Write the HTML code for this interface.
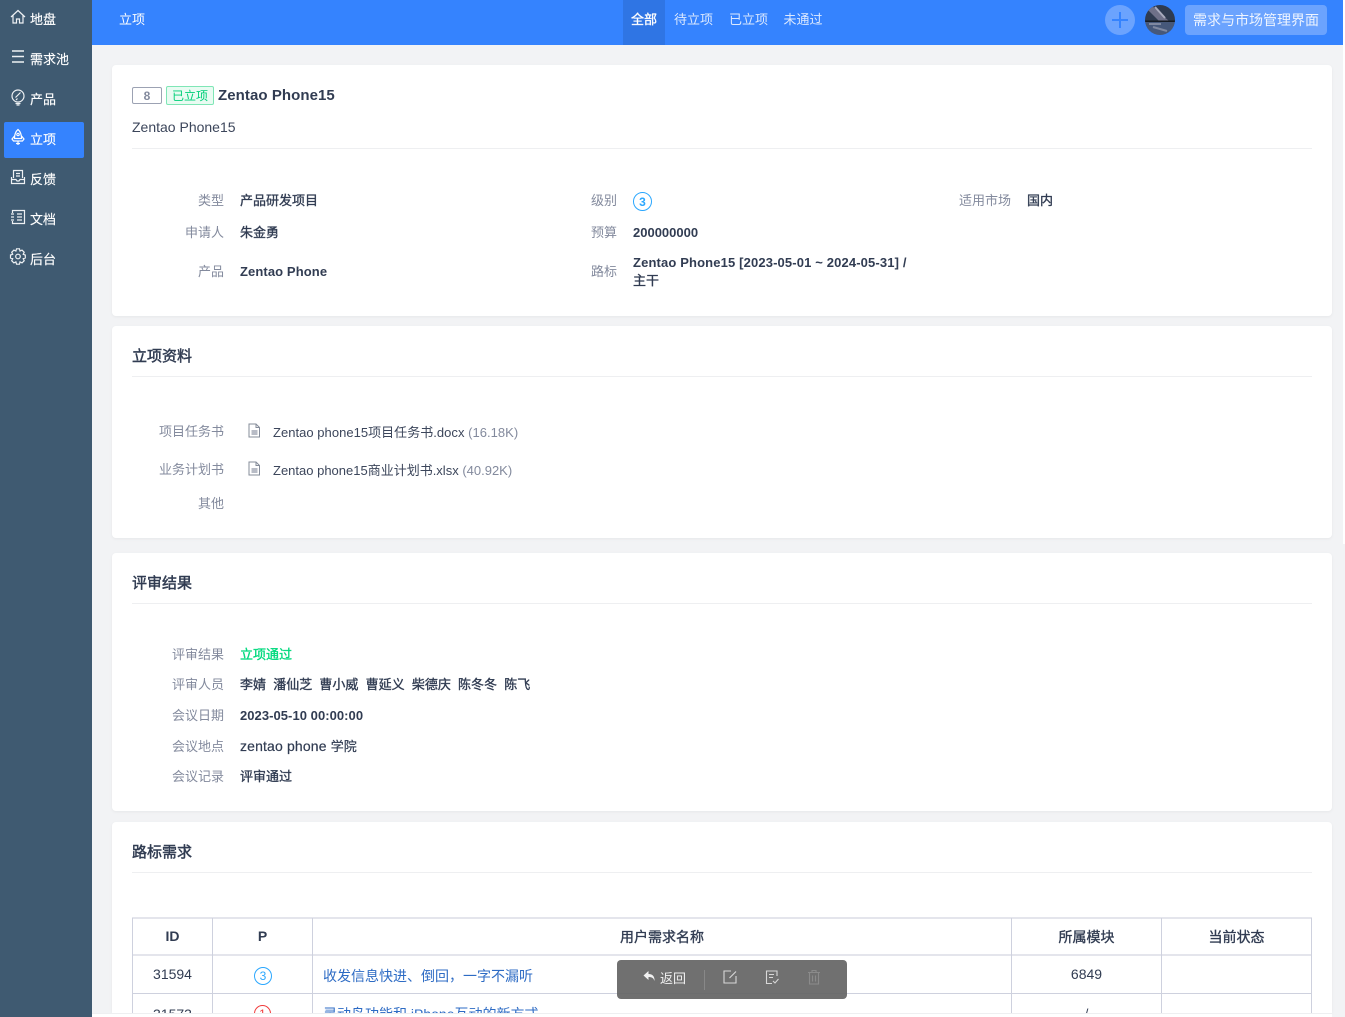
<!DOCTYPE html>
<html lang="zh"><head><meta charset="utf-8"><title>立项</title>
<style>
*{box-sizing:border-box}
html,body{margin:0;padding:0;width:1345px;height:1017px;overflow:hidden;background:#f2f3f5;font-family:"Liberation Sans","Noto Sans CJK SC",sans-serif;font-size:13px;color:#313c52}
.a{position:absolute;white-space:nowrap;line-height:18px}
#side{position:absolute;left:0;top:0;width:92px;height:1017px;background:#3f5a71}
.m{position:absolute;left:30px;color:#fff;font-size:13px;line-height:18px;white-space:nowrap;-webkit-text-stroke:.15px #fff}
.ic{position:absolute;left:9px;width:18px;height:18px;fill:none;stroke:#eef1f4;stroke-width:1.200}
#top{position:absolute;left:92px;top:0;width:1251px;height:45px;background:#3583fe}
.card{position:absolute;left:112px;width:1220px;background:#fff;border-radius:4px;box-shadow:0 1px 3px rgba(0,0,0,.05)}
.hr{position:absolute;left:132px;width:1180px;height:1px;background:#eeeff1}
.l{color:#838a9d;text-align:right}
.v{font-weight:700;color:#313c52;letter-spacing:.1px}
.cn{font-weight:400;-webkit-text-stroke:.35px #313c52}
.h{font-size:15px;font-weight:400;-webkit-text-stroke:.45px #313c52;line-height:20px}
.doc{position:absolute;width:14px;height:15px;fill:none;stroke:#858c9a;stroke-width:1}
.th{position:absolute;text-align:center;line-height:18px;font-size:14px;font-weight:400;-webkit-text-stroke:.35px #313c52}
.td{position:absolute;text-align:center;line-height:18px}
.vl{position:absolute;width:1px;background:#ced1de}
.hl{position:absolute;height:1px;background:#ced1de}
</style></head><body>
<div id="side">
<svg class="ic" style="top:8px" viewBox="0 0 18 18"><path d="M2 9 9 2.500 16 9M4 7.500V15h3.500v-4h3v4H14V7.500"/></svg><div class="m" style="top:10.500px">地盘</div>
<svg class="ic" style="top:48px" viewBox="0 0 18 18"><path d="M3 3h12M3 8.500h12M3 14h12" stroke-width="1.500"/></svg><div class="m" style="top:50.500px">需求池</div>
<svg class="ic" style="top:88px" viewBox="0 0 18 18"><circle cx="9" cy="8" r="6"/><path d="M6.500 15.500h5M7.500 17h3M11.500 4.500 6.500 9.500M8.500 10.500l-1.500 1.500"/></svg><div class="m" style="top:90.500px">产品</div>
<div style="position:absolute;left:4px;top:122px;width:80px;height:36px;background:#3583fe;border-radius:2px"></div>
<svg class="ic" style="top:128px;stroke:#fff" viewBox="0 0 18 18"><path d="M9 1.500C6 4 5.500 7 5.500 10.500h7C12.500 7 12 4 9 1.500ZM5.500 8 3 11l1.500 2h9l1.500-2-2.500-3M7 15.500h4M9 13v4"/><circle cx="9" cy="6.500" r="1.200"/></svg><div class="m" style="top:130.500px">立项</div>
<svg class="ic" style="top:168px" viewBox="0 0 18 18"><path d="M4.500 10V2.500h9V10M7 5.500h4M7 8h4M2.500 9v6.500h13V9M2.500 11.500H7l1 1.500h2l1-1.500h4.500"/></svg><div class="m" style="top:170.500px">反馈</div>
<svg class="ic" style="top:208px" viewBox="0 0 18 18"><path d="M3.500 5V2.500h12v13h-12V13M2 6h3M2 9h3M2 12h3M8 6h5M8 9h5M8 12h5"/></svg><div class="m" style="top:210.500px">文档</div>
<svg class="ic" style="top:247px" viewBox="0 0 18 18"><path d="M7.500 1.800h3l.5 2.200 2-.9 2.200 2.200-1 2 2.100.7v3l-2.100.7 1 2-2.200 2.200-2-1-.5 2.300h-3l-.6-2.300-2 1L2.700 13.700l1-2L1.500 11V8l2.200-.7-1-2L4.900 3.100l2 .9Z"/><circle cx="9" cy="9.500" r="2.300"/></svg><div class="m" style="top:250.500px">后台</div>
</div>

<div id="top"></div>
<div class="a" style="left:119px;top:11px;color:#fff">立项</div>
<div style="position:absolute;left:623px;top:0;width:42px;height:45px;background:#2f75e4"></div>
<div class="a" style="left:631px;top:11px;color:#fff;-webkit-text-stroke:.35px #fff">全部</div>
<div class="a" style="left:674px;top:11px;color:#dce9ff">待立项</div>
<div class="a" style="left:729px;top:11px;color:#dce9ff">已立项</div>
<div class="a" style="left:783.500px;top:11px;color:#dce9ff">未通过</div>
<div style="position:absolute;left:1105px;top:5px;width:30px;height:30px;border-radius:50%;background:#6ba3fe"></div>
<svg style="position:absolute;left:1105px;top:5px" width="30" height="30"><path d="M15 7v16M7 15h16" stroke="#3583fe" stroke-width="2"/></svg>
<svg style="position:absolute;left:1145px;top:5px" width="30" height="30" viewBox="0 0 30 30"><clipPath id="c"><circle cx="15" cy="15" r="15"/></clipPath><g clip-path="url(#c)"><rect width="30" height="16" fill="#2f3b50"/><path d="M6 0 24 16 14 16 2 4Z" fill="#6f7189"/><path d="M10 2 20 13" stroke="#a9abbd" stroke-width="2"/><rect y="16" width="30" height="14" fill="#46587a"/><rect y="15.500" width="30" height="1.500" fill="#161c25"/><path d="M8 22 22 26M4 19h12" stroke="#7f88a0" stroke-width="2" fill="none"/></g></svg>
<div style="position:absolute;left:1185px;top:5px;width:142px;height:30px;border-radius:4px;background:#6ba3fe"></div>
<div class="a" style="left:1193px;top:10px;font-size:14px;line-height:20px;color:#eef4ff">需求与市场管理界面</div>

<div class="card" style="top:65px;height:251px"></div>
<div class="a" style="left:132px;top:87px;width:30px;height:17px;border:1px solid #9ca2b3;border-radius:2px;text-align:center;font-size:12px;line-height:16px;font-weight:700;color:#838a9d">8</div>
<div class="a" style="left:166px;top:86px;width:48px;height:19px;border:1px solid #7fe6b6;border-radius:2px;background:#e9fbf2;text-align:center;font-size:12px;line-height:18px;color:#00cf78">已立项</div>
<div class="a" style="left:218px;top:86px;font-size:15px;line-height:20px;font-weight:700;letter-spacing:.07px;color:#313c52">Zentao Phone15</div>
<div class="a" style="left:132px;top:117px;font-size:14px;line-height:20px;color:#3c465b">Zentao Phone15</div>
<div class="hr" style="top:148px"></div>

<div class="a l" style="left:164px;top:192px;width:60px">类型</div><div class="a cn" style="left:240px;top:192px">产品研发项目</div>
<div class="a l" style="left:164px;top:224px;width:60px">申请人</div><div class="a cn" style="left:240px;top:224px">朱金勇</div>
<div class="a l" style="left:164px;top:263px;width:60px">产品</div><div class="a v" style="left:240px;top:263px">Zentao Phone</div>
<div class="a l" style="left:557px;top:192px;width:60px">级别</div>
<div class="a" style="left:633px;top:192px;width:19px;height:19px;border:1px solid #2ba7fe;border-radius:50%;text-align:center;line-height:18px;font-size:12px;font-weight:700;color:#2ba7fe">3</div>
<div class="a l" style="left:557px;top:224px;width:60px">预算</div><div class="a v" style="left:633px;top:224px;letter-spacing:0">200000000</div>
<div class="a l" style="left:557px;top:263px;width:60px">路标</div><div class="a v" style="left:633px;top:254px;letter-spacing:.14px">Zentao Phone15 [2023-05-01 ~ 2024-05-31] /</div><div class="a cn" style="left:633px;top:272px">主干</div>
<div class="a l" style="left:951px;top:192px;width:60px">适用市场</div><div class="a cn" style="left:1027px;top:192px">国内</div>

<div class="card" style="top:326px;height:212px"></div>
<div class="a h" style="left:132px;top:347px">立项资料</div>
<div class="hr" style="top:376px"></div>
<div class="a l" style="left:144px;top:423px;width:80px">项目任务书</div>
<svg class="doc" style="left:247px;top:423px" viewBox="0 0 14 15"><path d="M2 1h7l3.500 3.500V14H2ZM9 1v3.500h3.500"/><path d="M4.500 7h6v5h-6z" fill="#b8bcc6" stroke="none"/></svg>
<div class="a" style="left:273px;top:424px;color:#3c465b;letter-spacing:.03px">Zentao phone15项目任务书.docx <span style="color:#838a9d">(16.18K)</span></div>
<div class="a l" style="left:144px;top:461px;width:80px">业务计划书</div>
<svg class="doc" style="left:247px;top:461px" viewBox="0 0 14 15"><path d="M2 1h7l3.500 3.500V14H2ZM9 1v3.500h3.500"/><path d="M4.500 7h6v5h-6z" fill="#b8bcc6" stroke="none"/></svg>
<div class="a" style="left:273px;top:462px;color:#3c465b">Zentao phone15商业计划书.xlsx <span style="color:#838a9d">(40.92K)</span></div>
<div class="a l" style="left:144px;top:495px;width:80px">其他</div>

<div class="card" style="top:553px;height:258px"></div>
<div class="a h" style="left:132px;top:574px">评审结果</div>
<div class="hr" style="top:603px"></div>
<div class="a l" style="left:144px;top:646px;width:80px">评审结果</div><div class="a" style="left:240px;top:646px;color:#00d97e;-webkit-text-stroke:.35px #00d97e">立项通过</div>
<div class="a l" style="left:144px;top:676px;width:80px">评审人员</div><div class="a cn" style="left:240px;top:676px;word-spacing:3.600px">李婧 潘仙芝 曹小威 曹延义 柴德庆 陈冬冬 陈飞</div>
<div class="a l" style="left:144px;top:707px;width:80px">会议日期</div><div class="a v" style="left:240px;top:707px;letter-spacing:.05px">2023-05-10 00:00:00</div>
<div class="a l" style="left:144px;top:738px;width:80px">会议地点</div><div class="a cn" style="left:240px;top:737px;font-size:14px;letter-spacing:.15px;-webkit-text-stroke:.2px #313c52">zentao phone <span style="font-size:13px;letter-spacing:0">学院</span></div>
<div class="a l" style="left:144px;top:768px;width:80px">会议记录</div><div class="a cn" style="left:240px;top:768px">评审通过</div>

<div class="card" style="top:822px;height:191px;border-radius:4px 4px 0 0"></div>
<div style="position:absolute;left:92px;top:1013px;width:1240px;height:1px;background:#eeeff1"></div>
<div style="position:absolute;left:92px;top:1014px;width:1240px;height:3px;background:#fff"></div>
<div class="a h" style="left:132px;top:843px">路标需求</div>
<div class="hr" style="top:872px"></div>

<div class="hl" style="left:132px;top:917px;width:1180px;height:2px;background:#e4e5ec"></div>
<div class="hl" style="left:132px;top:954px;width:1180px;height:2px;background:#e4e5ec"></div>
<div class="hl" style="left:132px;top:993px;width:1180px"></div>
<div class="vl" style="left:132px;top:918px;height:95px"></div>
<div class="vl" style="left:212px;top:918px;height:95px"></div>
<div class="vl" style="left:312px;top:918px;height:95px"></div>
<div class="vl" style="left:1011px;top:918px;height:95px"></div>
<div class="vl" style="left:1161px;top:918px;height:95px"></div>
<div class="vl" style="left:1311px;top:918px;height:95px"></div>
<div class="th" style="left:133px;top:927px;width:79px;font-weight:700;-webkit-text-stroke:0">ID</div>
<div class="th" style="left:213px;top:927px;width:99px;font-weight:700;-webkit-text-stroke:0">P</div>
<div class="th" style="left:313px;top:928px;width:698px">用户需求名称</div>
<div class="th" style="left:1012px;top:928px;width:149px">所属模块</div>
<div class="th" style="left:1162px;top:928px;width:149px">当前状态</div>

<div style="position:absolute;left:0;top:994px;width:1345px;height:19px;overflow:hidden;pointer-events:none">
<div class="td" style="left:133px;top:11px;width:79px;font-size:14px">31573</div>
<div style="position:absolute;left:254px;top:11px;width:17px;height:17px;border:1px solid #f03b3b;border-radius:50%;text-align:center;line-height:16px;font-size:12px;color:#f03b3b">1</div>
<div class="a" style="left:323px;top:11px;font-size:14px;color:#2d6bc4">灵动岛功能和 iPhone互动的新方式</div>
<div class="td" style="left:1012px;top:11px;width:149px">/</div>
</div>
<div class="td" style="left:133px;top:965px;width:79px;font-size:14px">31594</div>
<div style="position:absolute;left:254px;top:967px;width:18px;height:18px;border:1px solid #2ba7fe;border-radius:50%;text-align:center;line-height:16px;font-size:12px;color:#2ba7fe">3</div>
<div class="a" style="left:323px;top:967px;font-size:14px;color:#2d6bc4">收发信息快进、倒回，一字不漏听</div>
<div class="td" style="left:1012px;top:965px;width:149px;font-size:14px">6849</div>

<div style="position:absolute;left:617px;top:960px;width:230px;height:39px;border-radius:4px;background:rgba(100,100,100,.92)"></div>
<svg style="position:absolute;left:642px;top:970px" width="16" height="14" viewBox="0 0 16 14"><path d="M6.500 1 1.500 5.500l5 4.500V7c3.500 0 5 1 6 4 .3-4-1.500-7-6-7Z" fill="#f1f1f1"/></svg>
<div class="a" style="left:660px;top:970px;color:#f1f1f1">返回</div>
<div style="position:absolute;left:704px;top:970px;width:1px;height:20px;background:#888"></div>
<svg style="position:absolute;left:722px;top:969px" width="16" height="16" viewBox="0 0 16 16" fill="none" stroke="#d8d8d8" stroke-width="1.100"><path d="M9 2H2v12h12V7M14 2.500 7.500 9"/></svg>
<svg style="position:absolute;left:764px;top:969px" width="16" height="16" viewBox="0 0 16 16" fill="none" stroke="#d8d8d8" stroke-width="1.100"><path d="M13 7V2H2.500v12.500H8M5 5.500h5M5 8.500h4M9 12l2 2 3.500-4"/></svg>
<svg style="position:absolute;left:806px;top:969px" width="16" height="16" viewBox="0 0 16 16" fill="none" stroke="#8b8b8b" stroke-width="1.100"><path d="M2 3.500h12M6 3.500V1.500h4v2M3.500 3.500V15h9V3.500M6.500 6.500v6M9.500 6.500v6"/></svg>

<div style="position:absolute;left:1343px;top:0;width:2px;height:544px;background:#fff"></div>
</body></html>
